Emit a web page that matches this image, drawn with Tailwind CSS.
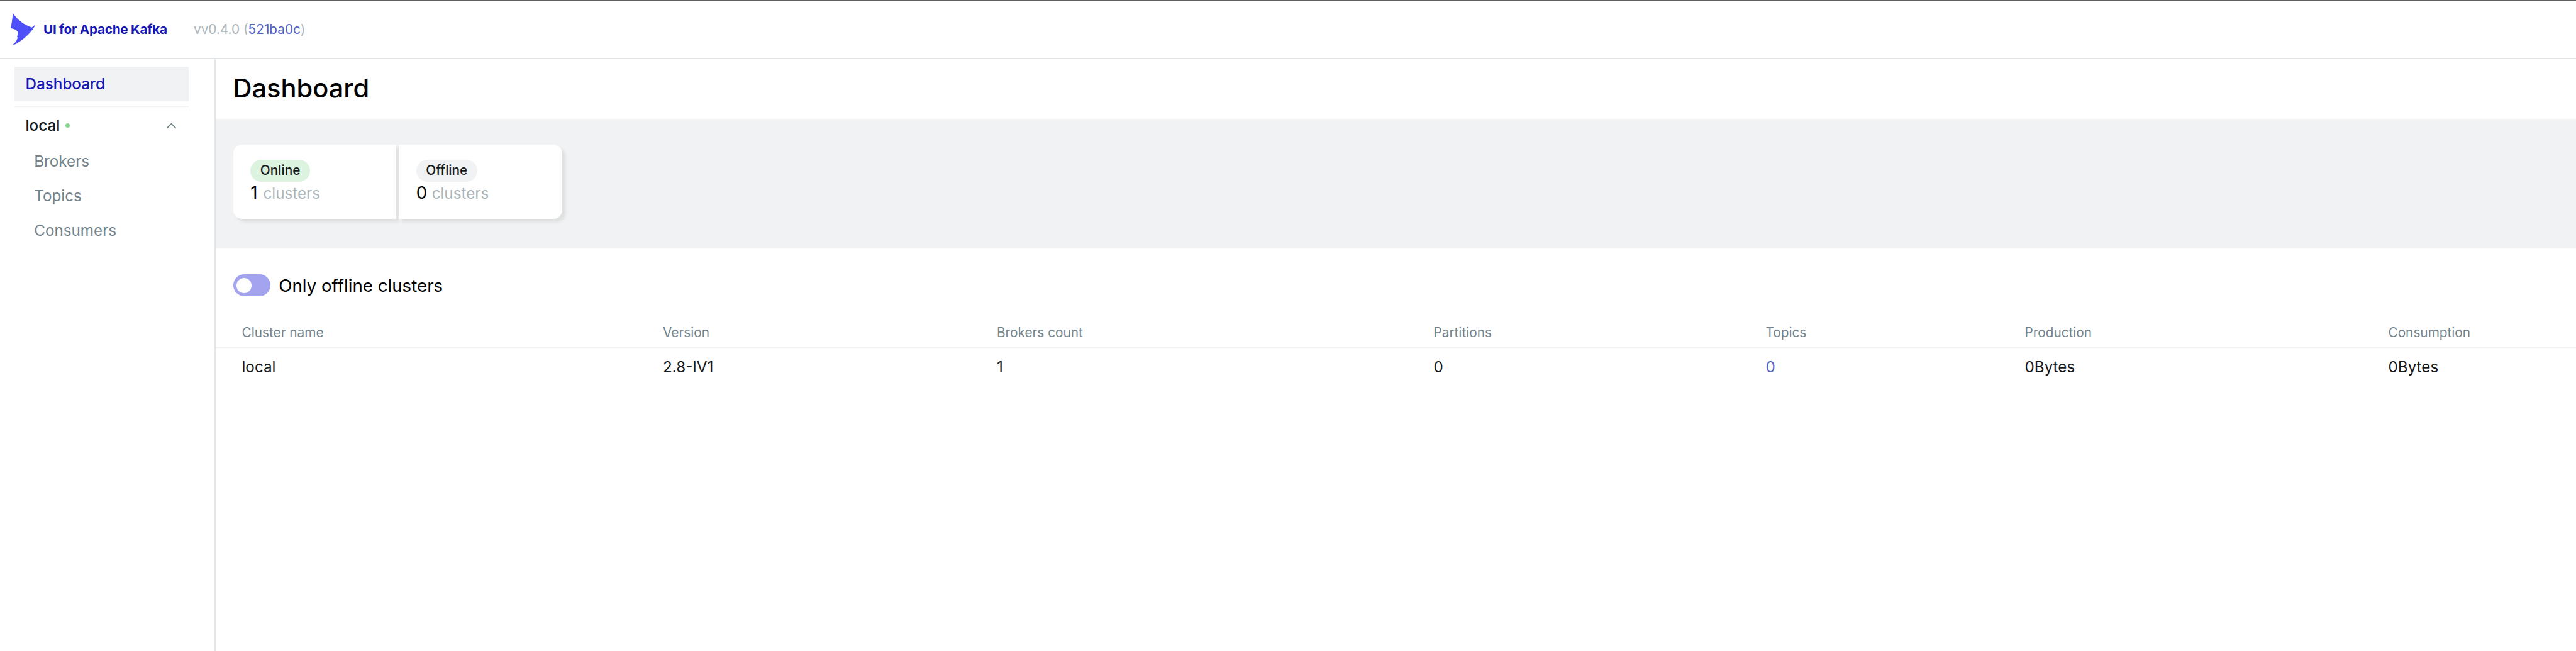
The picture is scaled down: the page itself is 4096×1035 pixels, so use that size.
<!DOCTYPE html>
<html lang="en">
<head>
<meta charset="utf-8">
<title>UI for Apache Kafka</title>
<script src="https://cdn.jsdelivr.net/npm/@tailwindcss/browser@4"></script>
</head>
<body class="flex h-[1035px] w-[4096px] flex-col overflow-hidden bg-white font-['Inter',sans-serif] text-[24.24px] leading-[30px] text-[#171a1c]">
  <header class="flex h-[94px] shrink-0 items-center border-t-2 border-b-2 border-t-[#5f5f5f] border-b-[#e3e6e8] pl-[15.5px] text-[20.77px]">
    <svg class="h-[54px] w-[42px] shrink-0" viewBox="53 70 145.6 187.2" fill="#4f4ff9"><path d="M68 73C95 112 130 138 172 152L189 139Q192 138 191 142C168 182 125 225 68 251Q66 251 67 249C78 240 91 225 95 207Q88 202 93 198C102 182 97 162 55 157Q65 125 68 73Z"/></svg>
    <span class="ml-[11.5px] w-[237px] whitespace-nowrap font-bold tracking-[-0.3px] text-[#1717b5]">UI for Apache Kafka</span>
    <span class="ml-[2px] whitespace-nowrap text-[#abb5ba]">vv0.4.0 (<a class="text-[#5262c8]">521ba0c</a>)</span>
  </header>
  <div class="flex min-h-0 flex-1">
    <nav class="w-[343px] shrink-0 border-r-2 border-[#e3e6e8] pt-[12px] pl-[22.5px]">
      <div class="flex h-[55px] w-[277px] items-center bg-[#f1f2f3] pl-[18px] font-medium text-[#1717b5]">Dashboard</div>
      <div class="mt-[7px] h-[2px] w-[277px] bg-[#f1f2f3]"></div>
      <div class="flex h-[59px] w-[277px] items-center pl-[18px] font-medium">
        <span>local</span>
        <span class="ml-[8.5px] h-[7px] w-[7px] rounded-full bg-[#84d68f]"></span>
        <svg class="mr-[18.5px] ml-auto h-[10px] w-[17px]" viewBox="0 0 17 10" fill="none" stroke="#73848c" stroke-width="1.7" stroke-linecap="round" stroke-linejoin="round"><path d="M1.8 8.4L8.5 1.7L15.2 8.4"/></svg>
      </div>
      <ul class="pl-[31.7px] text-[#73848c]">
        <li class="flex h-[55.4px] items-center">Brokers</li>
        <li class="flex h-[55.4px] items-center">Topics</li>
        <li class="flex h-[55.4px] items-center">Consumers</li>
      </ul>
    </nav>
    <main class="min-w-0 flex-1">
      <h1 class="flex h-[95px] items-center pb-[4px] pl-[27.5px] text-[41.55px] font-medium leading-[50px] text-black">Dashboard</h1>
      <section class="flex h-[206px] gap-[4px] bg-[#f1f2f3] pt-[41px] pl-[27.5px]">
        <div class="h-[118px] w-[259.5px] rounded-l-[14px] bg-white pt-[24px] pl-[27.7px] shadow-[5px_5px_5px_rgba(0,0,0,0.08)]">
          <div class="flex h-[34.6px] w-fit items-center rounded-full bg-[#dcf3df] px-[15.6px] text-[20.77px] font-medium">Online</div>
          <div class="flex h-[34px] items-baseline gap-[9px] whitespace-nowrap"><span class="text-[27.7px] leading-[34px] text-black">1</span><span class="text-[#abb5ba]">clusters</span></div>
        </div>
        <div class="h-[118px] w-[259.5px] rounded-r-[14px] bg-white pt-[24px] pl-[27.7px] shadow-[5px_5px_5px_rgba(0,0,0,0.08)]">
          <div class="flex h-[34.6px] w-fit items-center rounded-full bg-[#f1f2f3] px-[15.6px] text-[20.77px] font-medium">Offline</div>
          <div class="flex h-[34px] items-baseline gap-[7.5px] whitespace-nowrap"><span class="text-[27.7px] leading-[34px] text-black">0</span><span class="text-[#abb5ba]">clusters</span></div>
        </div>
      </section>
      <div class="flex h-[117px] items-center pl-[27.5px] text-[27.7px] text-black">
        <span class="flex h-[35px] w-[59px] items-center rounded-full bg-[#a3a3f0] pl-[5px]"><span class="h-[24px] w-[24px] rounded-full bg-white"></span></span>
        <span class="ml-[13.8px]">Only offline clusters</span>
      </div>
      <div class="grid h-[42px] grid-cols-[669.5px_531px_694.5px_528px_412px_578px_1fr] items-center border-b-2 border-[#f1f2f3] pb-[7px] pl-[41.5px] text-[20.77px] leading-[26px] text-[#73848c]">
        <span>Cluster name</span><span>Version</span><span>Brokers count</span><span>Partitions</span><span>Topics</span><span>Production</span><span>Consumption</span>
      </div>
      <div class="grid h-[60px] grid-cols-[669.5px_531px_694.5px_528px_412px_578px_1fr] items-center pl-[41.5px]">
        <span>local</span><span>2.8-IV1</span><span>1</span><span>0</span><a class="text-[#5262c8]">0</a><span>0Bytes</span><span>0Bytes</span>
      </div>
    </main>
  </div>
</body>
</html>
